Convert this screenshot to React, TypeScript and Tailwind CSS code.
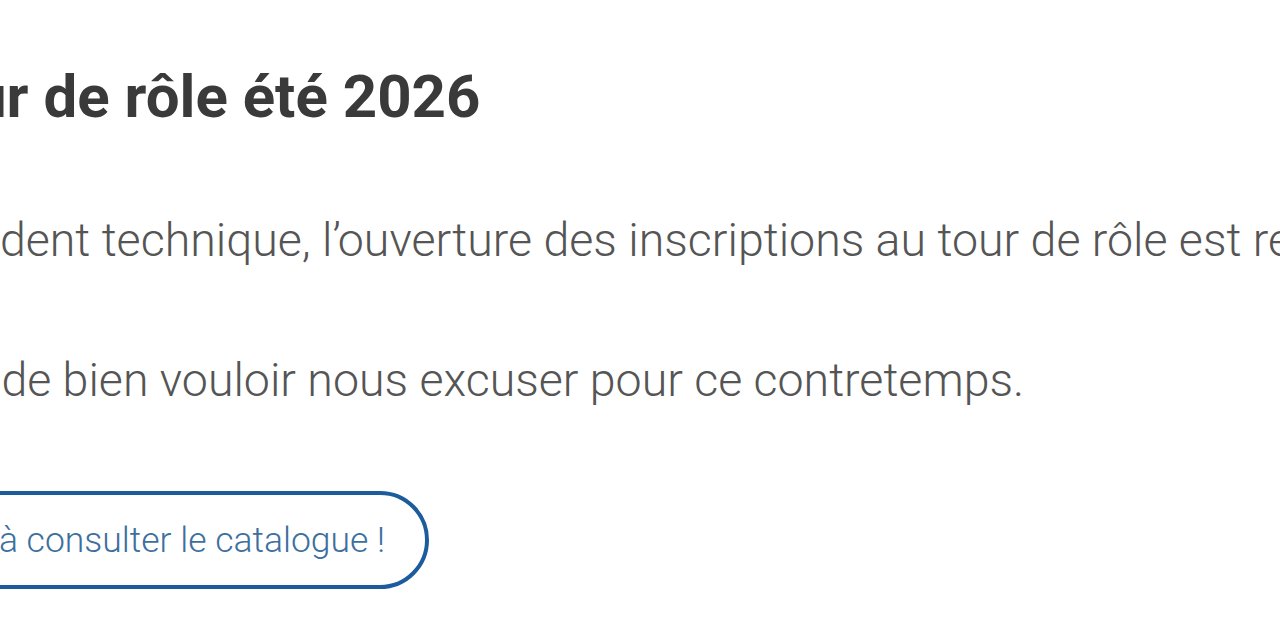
export default function App() {
  return (
    <div className="w-[1280px] h-[640px] overflow-hidden bg-white font-['Roboto',sans-serif]">
      {/* Content column; its left part sits outside the viewport */}
      <div className="-ml-[140px] pt-[60px] whitespace-nowrap">
        <h1 className="pl-[47px] text-[60px] leading-[74px] font-bold text-[#3a3a3a]">Tour de rôle été 2026</h1>
        <p className="mt-[72px] pl-[2px] text-[46.5px] leading-[69px] font-light text-[#555555]">
          Un incident technique, l’ouverture des inscriptions au tour de rôle est reportée.
        </p>
        <p className="mt-[71px] pl-[12px] text-[46.5px] leading-[69px] font-light text-[#555555]">
          Prière de bien vouloir nous excuser pour ce contretemps.
        </p>
        <a
          href="#"
          className="mt-[76px] inline-block rounded-full border-4 border-[#1d5c9c] py-[19px] pl-[63px] pr-[40px] text-[35.5px] leading-[52px] font-light text-[#3d6f9e]"
        >
          Prêt à consulter le catalogue !
        </a>
      </div>
    </div>
  );
}
